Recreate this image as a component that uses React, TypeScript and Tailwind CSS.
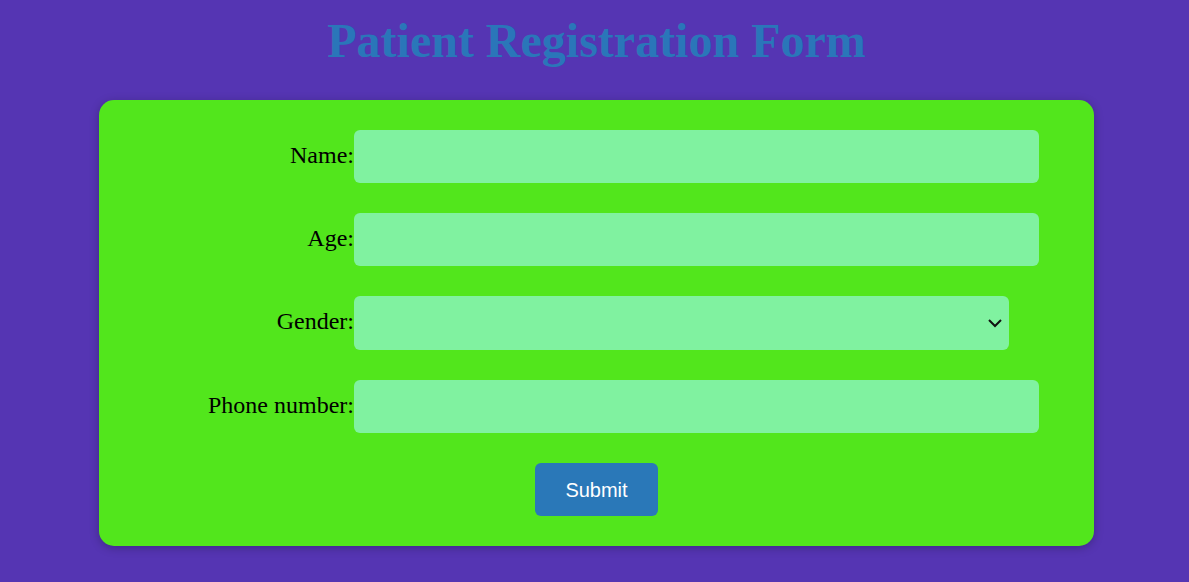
import * as React from "react";

type Field = {
  label: string;
  kind: "text" | "number" | "select" | "tel";
};

const FIELDS: Field[] = [
  { label: "Name:", kind: "text" },
  { label: "Age:", kind: "number" },
  { label: "Gender:", kind: "select" },
  { label: "Phone number:", kind: "tel" },
];

export default function App() {
  return (
    <div className="min-h-[582px] w-full bg-[#5535b3] pl-[4px] pt-[17px] font-['Liberation_Serif',serif]">
      <h1 className="text-center text-[48px] font-bold leading-none text-[#2a76b9]">
        Patient Registration Form
      </h1>

      {/* form card */}
      <form
        onSubmit={(e) => e.preventDefault()}
        className="mx-auto mt-[35px] flex w-[995px] flex-col gap-[30px] rounded-[15px] bg-[#52e61c] py-[30px] shadow-[0_2px_10px_rgba(0,0,0,0.25)]"
      >
        {FIELDS.map((f) => (
          <div key={f.label} className="flex items-center">
            <label className="mb-[4px] w-[255px] text-right text-[24px] leading-none text-black">
              {f.label}
            </label>
            {f.kind === "select" ? (
              <div className="relative h-[54px] w-[655px]">
                <select className="h-full w-full appearance-none rounded-[6px] bg-[#80f2a0] px-3 text-[20px] text-black outline-none">
                  <option value=""></option>
                  <option value="male">Male</option>
                  <option value="female">Female</option>
                  <option value="other">Other</option>
                </select>
                <svg
                  className="pointer-events-none absolute right-[6px] top-[19px]"
                  width="16"
                  height="16"
                  viewBox="0 0 16 16"
                  fill="none"
                >
                  <path d="M2 5l6 6 6-6" stroke="#111" strokeWidth="2" />
                </svg>
              </div>
            ) : (
              <input
                type={f.kind}
                className="h-[53px] w-[685px] rounded-[6px] bg-[#80f2a0] px-3 text-[20px] text-black outline-none"
              />
            )}
          </div>
        ))}

        <div className="flex justify-center">
          <button
            type="submit"
            className="h-[53px] w-[123px] rounded-[6px] bg-[#2a78b8] font-['Liberation_Sans',Arial,sans-serif] text-[20px] text-white"
          >
            Submit
          </button>
        </div>
      </form>
    </div>
  );
}
